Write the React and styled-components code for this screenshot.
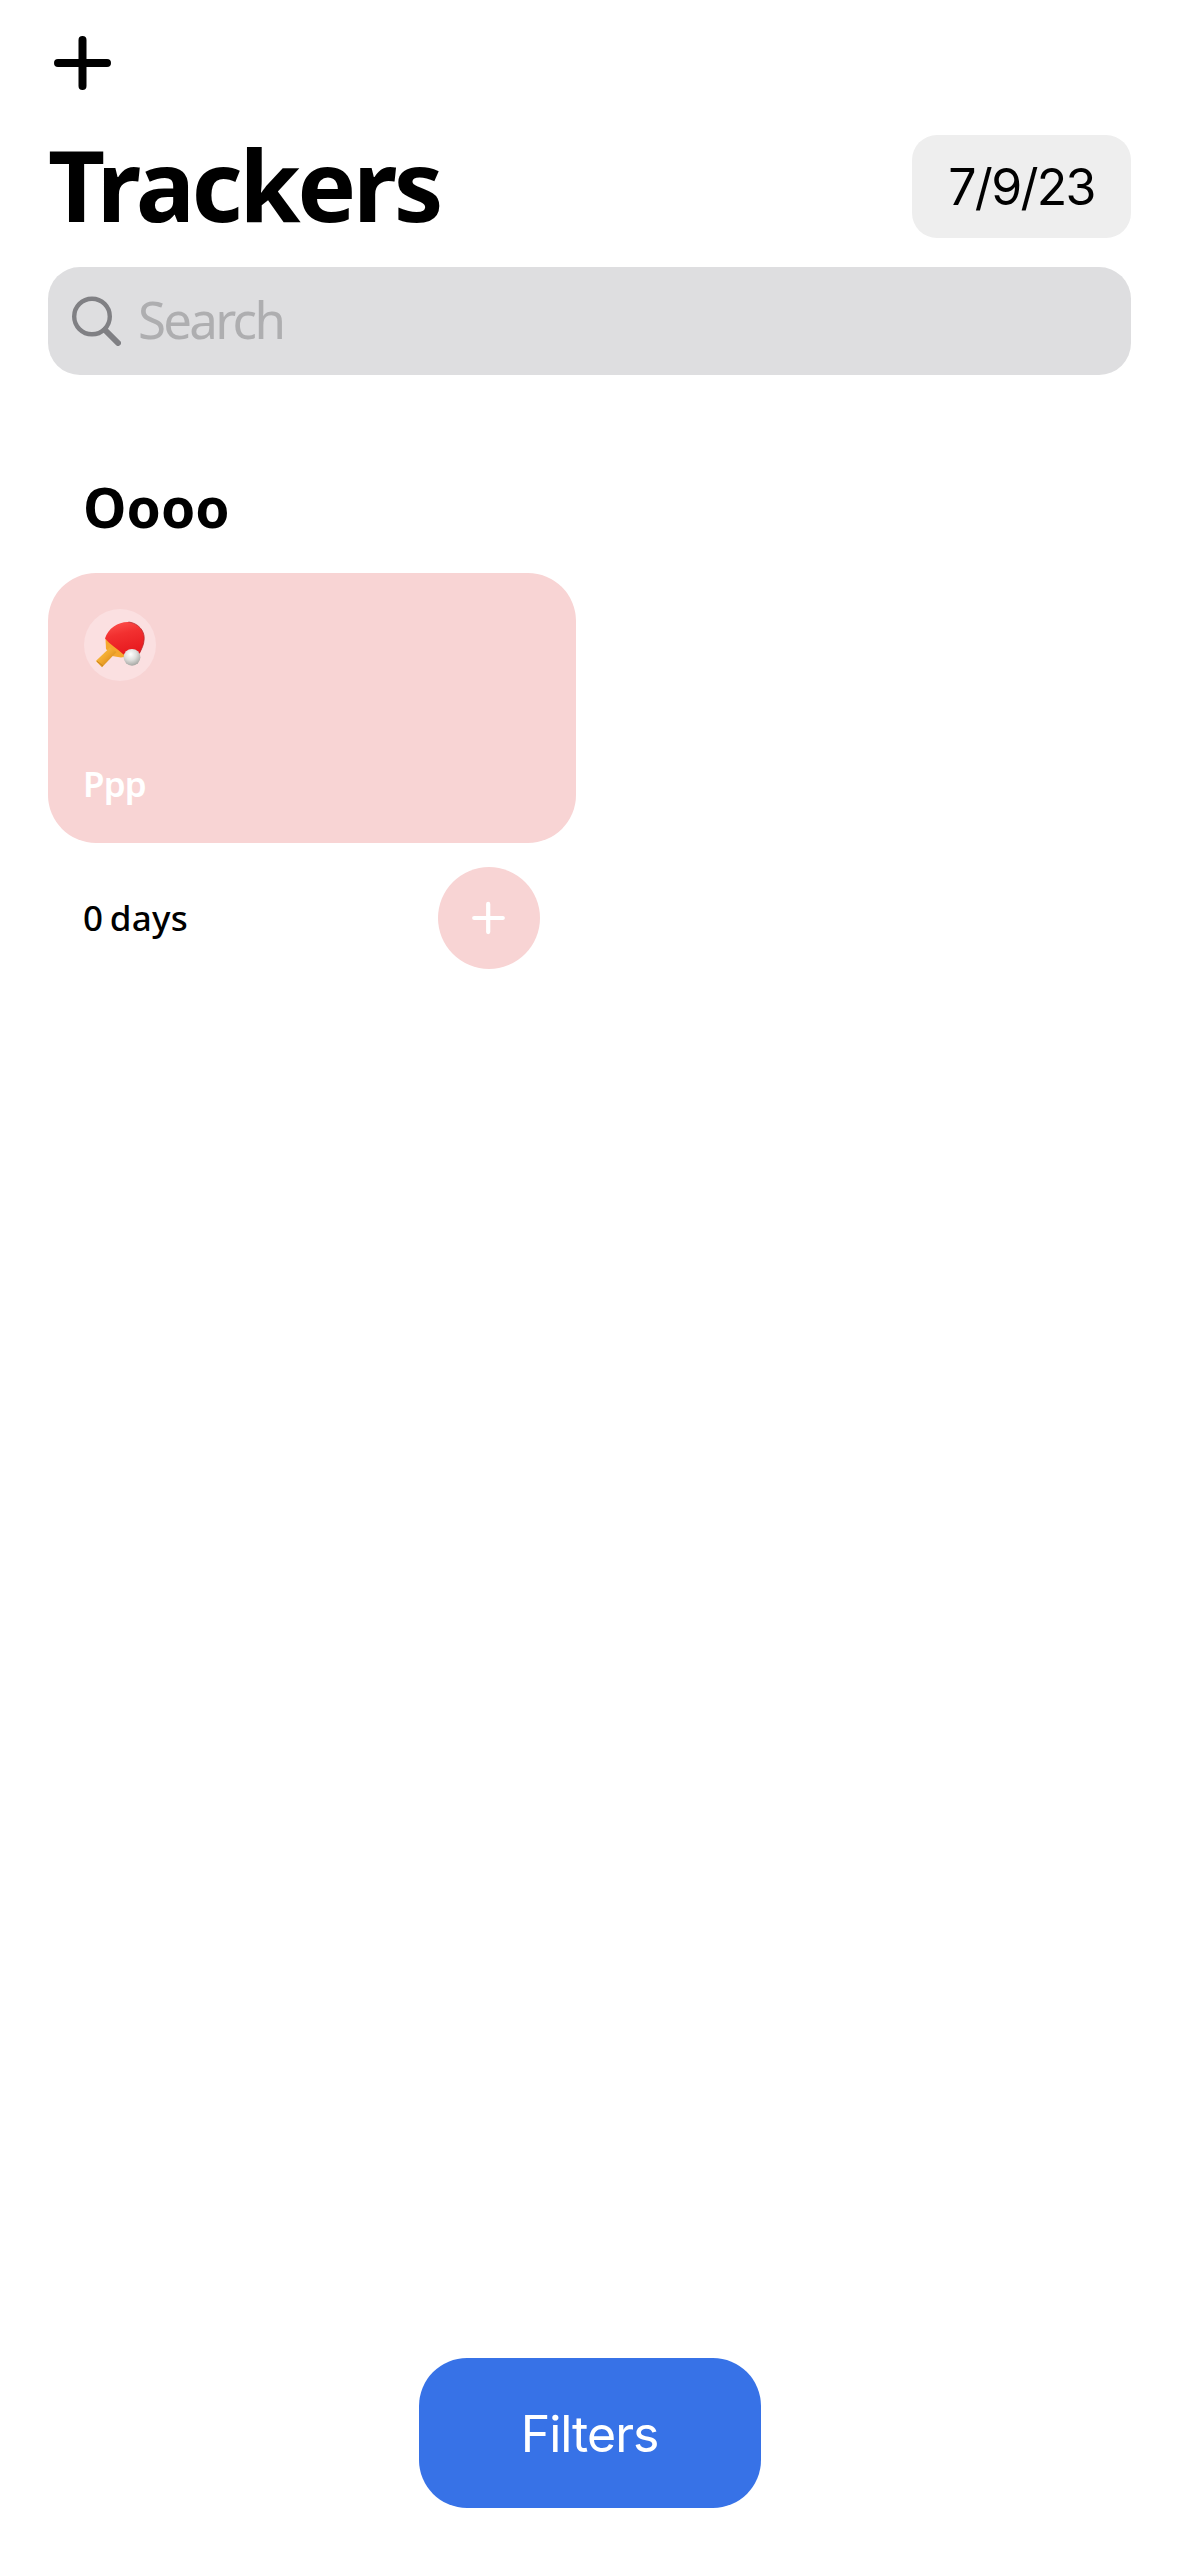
import React from "react";
import styled, { createGlobalStyle } from "styled-components";

const humanist = '"Noto Sans", "Open Sans", sans-serif';
const grotesque = 'Inter, "Liberation Sans", sans-serif';

const GlobalStyle = createGlobalStyle`
  * { box-sizing: border-box; }
  body { margin: 0; background: #fff; }
  button, input { border: 0; padding: 0; margin: 0; font: inherit; color: inherit; background: none; }
`;

const Screen = styled.main`
  display: flex;
  flex-direction: column;
  min-height: 2556px;
  padding: 36px 48px 48px;
  background: #fff;
  color: #000;
  font-family: ${humanist};
`;

const AddButton = styled.button`
  display: flex;
  width: 57px;
  height: 54px;
  margin-left: 6px;
`;

const Header = styled.header`
  display: flex;
  align-items: center;
  justify-content: space-between;
  height: 103px;
  margin-top: 45px;
`;

const Title = styled.h1`
  margin: 0;
  padding-bottom: 6px;
  font-size: 99px;
  font-weight: 700;
  line-height: 120px;
  letter-spacing: -3.4px;
`;

const DateButton = styled.button`
  width: 219px;
  height: 103px;
  border-radius: 25px;
  background: #eeeeee;
  font-family: ${grotesque};
  font-size: 50px;
  line-height: 60px;
  letter-spacing: -1.7px;
`;

const SearchBar = styled.label`
  display: flex;
  align-items: center;
  gap: 17px;
  height: 108px;
  margin-top: 29px;
  padding-left: 24px;
  border-radius: 32px;
  background: #dedee0;
`;

const SearchText = styled.span`
  padding-bottom: 5px;
  color: #aeaeb0;
  font-size: 51px;
  line-height: 60px;
  letter-spacing: -2.7px;
`;

const Section = styled.section`
  display: flex;
  flex-direction: column;
  width: 528px;
  margin-top: 98px;
`;

const SectionTitle = styled.h2`
  height: 100px;
  margin: 0;
  padding: 1px 0 0 35px;
  font-size: 55px;
  font-weight: 700;
  line-height: 66px;
`;

const Card = styled.article`
  display: flex;
  flex-direction: column;
  align-items: flex-start;
  justify-content: space-between;
  height: 270px;
  padding: 36px 36px 32px;
  border-radius: 48px;
  background: #f8d4d4;
`;

const EmojiBadge = styled.div`
  width: 72px;
  height: 72px;
  border-radius: 50%;
  background: #fbe0e1;
`;

const Label = styled.span`
  margin-left: -1px;
  color: ${(p) => (p.$light ? "#fff" : "#000")};
  font-size: 35px;
  font-weight: ${(p) => (p.$light ? 600 : 500)};
  line-height: 54px;
  letter-spacing: ${(p) => p.$tracking || 0}px;
  word-spacing: -3px;
`;

const CardFooter = styled.div`
  display: flex;
  align-items: center;
  justify-content: space-between;
  height: 102px;
  margin-top: 24px;
  padding: 0 36px;
`;

const CompleteButton = styled.button`
  display: flex;
  align-items: center;
  justify-content: center;
  width: 102px;
  height: 102px;
  padding-right: 1px;
  border-radius: 50%;
  background: #f8d4d4;
`;

const FiltersButton = styled.button`
  align-self: center;
  width: 342px;
  height: 150px;
  margin-top: auto;
  padding-top: 2px;
  border-radius: 48px;
  background: #3772e7;
  color: #fff;
  font-family: ${grotesque};
  font-size: 50px;
  line-height: 60px;
  letter-spacing: -1px;
`;

function Paddle() {
  return (
    <svg width="72" height="72" viewBox="0 0 72 72">
      <defs>
        <linearGradient id="rubber" x1="0" y1="0" x2="0.3" y2="1">
          <stop offset="0" stopColor="#ff5550" />
          <stop offset="0.45" stopColor="#f23030" />
          <stop offset="1" stopColor="#e81b20" />
        </linearGradient>
        <linearGradient id="wood" x1="0" y1="0" x2="1" y2="1">
          <stop offset="0" stopColor="#ffcf54" />
          <stop offset="0.5" stopColor="#f0a52c" />
          <stop offset="1" stopColor="#b87310" />
        </linearGradient>
        <radialGradient id="ball" cx="0.42" cy="0.32" r="0.7">
          <stop offset="0" stopColor="#ffffff" />
          <stop offset="0.5" stopColor="#dededc" />
          <stop offset="1" stopColor="#a5a5a1" />
        </radialGradient>
      </defs>
      <path d="M21.5 30 L22 40 L28 47 L37 48.5 L46 47 L44 39 Z" fill="#f5a72e" />
      <path d="M26 38.5 L32.5 43 L18 58.3 L11.8 52 Z" fill="url(#wood)" />
      <path d="M13 52.3 L19 57" stroke="#c98418" strokeWidth="1" />
      <path
        d="M21 29.5 C24 19 35 12.5 44.5 13 C54 14 60.5 21.5 60.2 29.5 C60 36 57.5 40 55.5 45 L39.5 45.5 C33 39.5 26 35.5 21 29.5 Z"
        fill="url(#rubber)"
      />
      <path d="M44.5 13 C54 14 60.5 21.5 60.2 29.5 C60 36 57.5 40 55.5 44" fill="none" stroke="#b8282c" strokeWidth="0.8" />
      <circle cx="48" cy="48.3" r="8.4" fill="url(#ball)" />
    </svg>
  );
}

export default function App() {
  return (
    <>
      <GlobalStyle />
      <Screen>
        <AddButton aria-label="Add tracker">
          <svg width="57" height="54" viewBox="0 0 57 54" fill="none" stroke="#000" strokeWidth="8" strokeLinecap="round">
            <path d="M28.5 4V50M4 27H53" />
          </svg>
        </AddButton>
        <Header>
          <Title>Trackers</Title>
          <DateButton>7/9/23</DateButton>
        </Header>
        <SearchBar>
          <svg width="49" height="50" viewBox="0 0 49 50" fill="none" stroke="#808084">
            <circle cx="20" cy="20.5" r="17.8" strokeWidth="4.4" />
            <path d="M33 34L46 47" strokeWidth="6" strokeLinecap="round" />
          </svg>
          <SearchText>Search</SearchText>
        </SearchBar>
        <Section>
          <SectionTitle>Oooo</SectionTitle>
          <Card>
            <EmojiBadge>
              <Paddle />
            </EmojiBadge>
            <Label $light $tracking={-0.9}>Ppp</Label>
          </Card>
          <CardFooter>
            <Label $tracking={0.3}>0 days</Label>
            <CompleteButton aria-label="Complete">
              <svg width="33" height="36" viewBox="0 0 33 36" fill="none" stroke="#fff" strokeWidth="4.2" strokeLinecap="round">
                <path d="M16.2 3.9V32.1M2.2 18H30.8" />
              </svg>
            </CompleteButton>
          </CardFooter>
        </Section>
        <FiltersButton>Filters</FiltersButton>
      </Screen>
    </>
  );
}
